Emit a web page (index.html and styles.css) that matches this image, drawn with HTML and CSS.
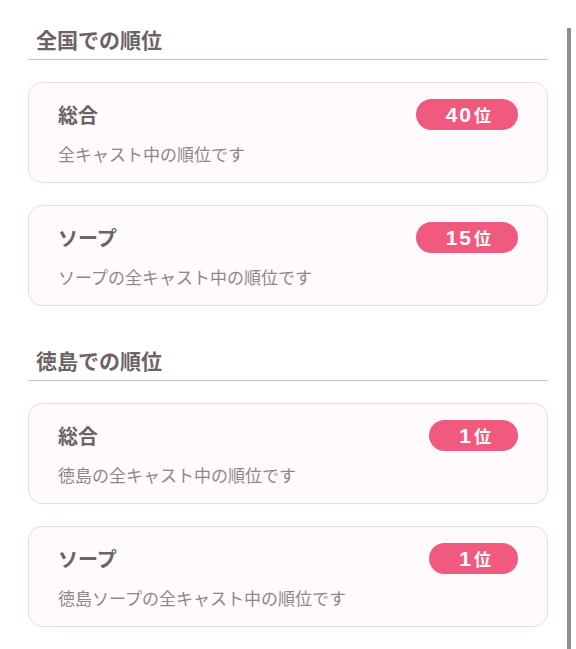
FILE: index.html
```html
<!DOCTYPE html>
<html lang="ja">
<head>
<meta charset="utf-8">
<link rel="stylesheet" href="styles.css">
</head>
<body>
<div class="page">
  <main class="content">
    <section class="section">
      <h2 class="section-title">全国での順位</h2>
      <div class="card">
        <div class="card-row">
          <span class="card-title">総合</span>
          <span class="badge"><span class="num">40</span><span class="unit">位</span></span>
        </div>
        <p class="card-desc">全キャスト中の順位です</p>
      </div>
      <div class="card">
        <div class="card-row">
          <span class="card-title">ソープ</span>
          <span class="badge"><span class="num">15</span><span class="unit">位</span></span>
        </div>
        <p class="card-desc">ソープの全キャスト中の順位です</p>
      </div>
    </section>
    <section class="section">
      <h2 class="section-title">徳島での順位</h2>
      <div class="card">
        <div class="card-row">
          <span class="card-title">総合</span>
          <span class="badge"><span class="num">1</span><span class="unit">位</span></span>
        </div>
        <p class="card-desc">徳島の全キャスト中の順位です</p>
      </div>
      <div class="card">
        <div class="card-row">
          <span class="card-title">ソープ</span>
          <span class="badge"><span class="num">1</span><span class="unit">位</span></span>
        </div>
        <p class="card-desc">徳島ソープの全キャスト中の順位です</p>
      </div>
    </section>
  </main>
  <div class="scrollbar"></div>
</div>
</body>
</html>
```
FILE: styles.css
```css
html, body {
  margin: 0;
  padding: 0;
  background: #ffffff;
}
body {
  font-family: "Noto Sans CJK JP", "Noto Sans", sans-serif;
}
.page {
  display: flex;
  height: 649px;
  overflow: hidden;
}
.content {
  width: 520px;
  margin-left: 28px;
  padding-top: 24px;
}
.section + .section {
  margin-top: 39px;
}
.section-title {
  margin: 0;
  padding: 0 0 5px 8px;
  font-size: 21px;
  line-height: 30px;
  font-weight: 700;
  color: #6b6365;
  border-bottom: 1.5px solid #cbbdc0;
}
.card {
  margin-top: 22px;
  border: 1px solid #efd9de;
  border-radius: 14px;
  background: #fffbfc;
  padding: 16px 29px 17px 29px;
}
.card + .card {
  margin-top: 22px;
}
.card-row {
  display: flex;
  align-items: center;
  justify-content: space-between;
  height: 31px;
}
.card-title {
  font-size: 20px;
  line-height: 28px;
  font-weight: 700;
  color: #6b6365;
}
.card-desc {
  margin: 13px 0 0 0;
  font-size: 17px;
  line-height: 22px;
  color: #8e8688;
}
.badge {
  display: flex;
  align-items: center;
  height: 31px;
  padding: 0 27px 0 30px;
  border-radius: 16px;
  background: #ef5a7e;
  color: #ffffff;
  font-weight: 700;
}
.num {
  font-family: "Liberation Sans", Arial, sans-serif;
  font-size: 21px;
  letter-spacing: 2px;
  line-height: 31px;
}
.unit {
  font-size: 17px;
  line-height: 31px;
  margin-left: 1px;
}
.scrollbar {
  width: 4px;
  margin-left: 19px;
  margin-top: 28px;
  background: #8e8e8e;
}
```
